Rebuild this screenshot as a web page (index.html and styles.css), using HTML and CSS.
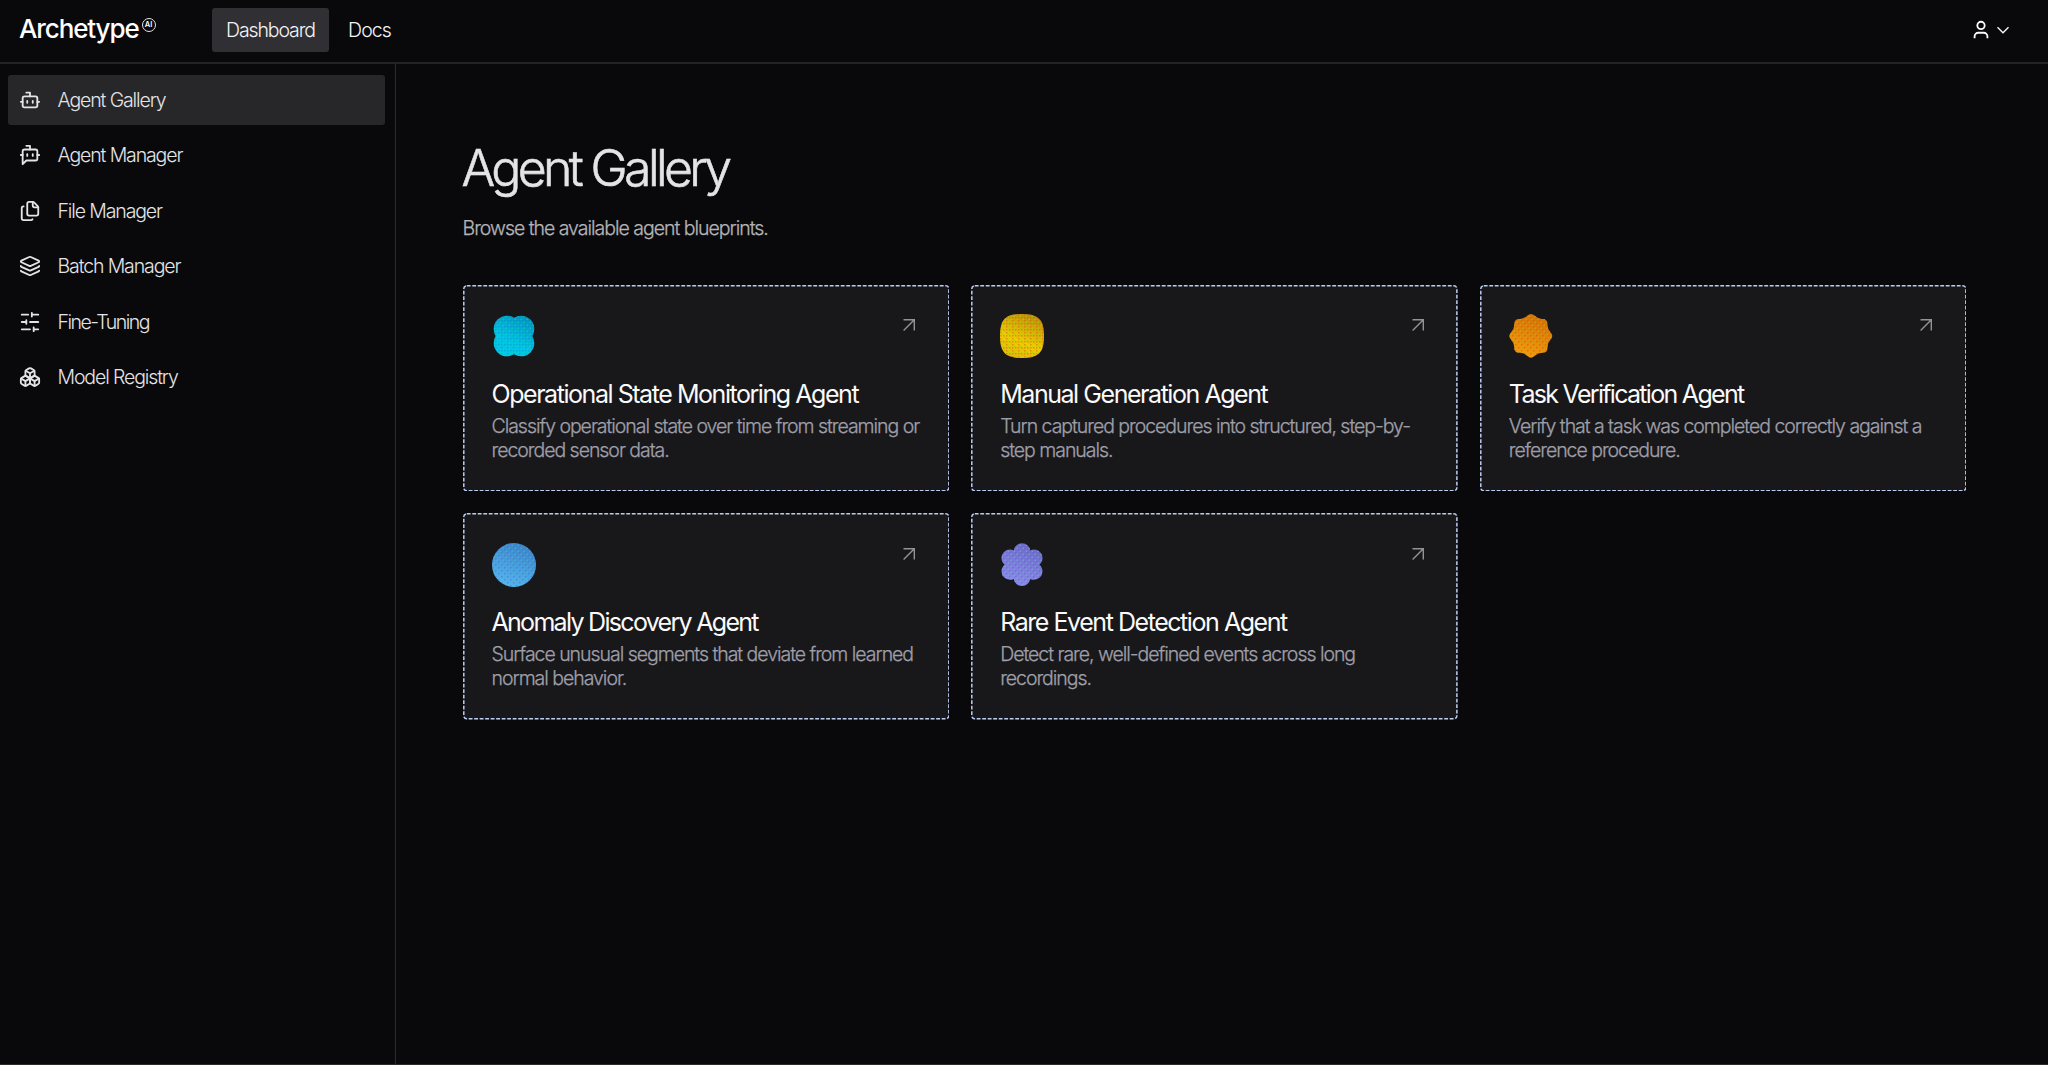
FILE: index.html
```html
<!DOCTYPE html>
<html lang="en">

<head>
  <meta charset="UTF-8">
  <meta name="viewport" content="width=device-width, initial-scale=1.0">
  <title>Agent Gallery</title>
  <link rel="stylesheet" href="styles.css">
</head>

<body>

  <!-- top bar -->
  <header class="topbar">
    <a class="logo">Archetype<span class="logo-badge">AI</span></a>
    <nav class="top-nav">
      <a class="top-link active">Dashboard</a>
      <a class="top-link docs">Docs</a>
    </nav>
    <button class="user-menu">
      <svg class="icon-user" viewBox="0 0 24 24"><path d="M19 21v-2a4 4 0 0 0-4-4H9a4 4 0 0 0-4 4v2"/><circle cx="12" cy="7" r="4"/></svg>
      <svg class="icon-chevron" viewBox="0 0 24 24"><path d="m6 9 6 6 6-6"/></svg>
    </button>
  </header>

  <div class="layout">

    <!-- sidebar -->
    <aside class="sidebar">
      <a class="side-link active">
        <svg viewBox="0 0 24 24"><path d="M12 8V4H8"/><rect width="16" height="12" x="4" y="8" rx="2"/><path d="M2 14h2M20 14h2M15 13v2M9 13v2"/></svg>
        <span>Agent Gallery</span>
      </a>
      <a class="side-link">
        <svg viewBox="0 0 24 24"><path d="M12 6V2H8"/><path d="m8 18-4 4V8a2 2 0 0 1 2-2h12a2 2 0 0 1 2 2v8a2 2 0 0 1-2 2Z"/><path d="M2 12h2M9 11v2M15 11v2M20 12h2"/></svg>
        <span>Agent Manager</span>
      </a>
      <a class="side-link">
        <svg viewBox="0 0 24 24"><path d="M15 2a2 2 0 0 1 1.414.586l4 4A2 2 0 0 1 21 8v7a2 2 0 0 1-2 2h-8a2 2 0 0 1-2-2V4a2 2 0 0 1 2-2z"/><path d="M15 2v4a2 2 0 0 0 2 2h4"/><path d="M5 7a2 2 0 0 0-2 2v11a2 2 0 0 0 2 2h8a2 2 0 0 0 1.732-1"/></svg>
        <span>File Manager</span>
      </a>
      <a class="side-link">
        <svg viewBox="0 0 24 24"><path d="m12.83 2.18a2 2 0 0 0-1.66 0L2.6 6.08a1 1 0 0 0 0 1.83l8.58 3.91a2 2 0 0 0 1.66 0l8.58-3.9a1 1 0 0 0 0-1.83Z"/><path d="M2 12a1 1 0 0 0 .58.91l8.6 3.91a2 2 0 0 0 1.65 0l8.58-3.9A1 1 0 0 0 22 12"/><path d="M2 17a1 1 0 0 0 .58.91l8.6 3.91a2 2 0 0 0 1.65 0l8.58-3.9A1 1 0 0 0 22 17"/></svg>
        <span>Batch Manager</span>
      </a>
      <a class="side-link">
        <svg viewBox="0 0 24 24"><path d="M21 4h-7M10 4H3M21 12h-9M8 12H3M21 20h-5M12 20H3M14 2v4M8 10v4M16 18v4"/></svg>
        <span class="tuning-text">Fine-Tuning</span>
      </a>
      <a class="side-link">
        <svg viewBox="0 0 24 24"><path d="M2.97 12.92A2 2 0 0 0 2 14.63v3.24a2 2 0 0 0 .97 1.71l3 1.8a2 2 0 0 0 2.06 0L12 19v-5.5l-5-3-4.03 2.42Z"/><path d="m7 16.5-4.74-2.85M7 16.5l5-3M7 16.5v5.17"/><path d="M12 13.5V19l3.97 2.38a2 2 0 0 0 2.06 0l3-1.8a2 2 0 0 0 .97-1.71v-3.24a2 2 0 0 0-.97-1.71L17 10.5l-5 3Z"/><path d="m17 16.5-5-3M17 16.5l4.74-2.85M17 16.5v5.17"/><path d="M7.97 4.42A2 2 0 0 0 7 6.13v4.37l5 3 5-3V6.13a2 2 0 0 0-.97-1.71l-3-1.8a2 2 0 0 0-2.06 0l-3 1.8Z"/><path d="M12 8 7.26 5.15M12 8l4.74-2.85M12 13.5V8"/></svg>
        <span>Model Registry</span>
      </a>
    </aside>

    <!-- main content -->
    <main class="content">
      <h1>Agent Gallery</h1>
      <p class="subtitle">Browse the available agent blueprints.</p>

      <div class="agent-grid">
        <a class="agent-card">
          <svg class="outline"><rect/></svg>
          <div class="card-top">
            <svg class="agent-icon" viewBox="0 0 44 44">
              <g clip-path="url(#clover)"><rect width="44" height="44" fill="url(#cyan)"/><rect width="44" height="44" fill="url(#cyan-dots)"/></g>
            </svg>
            <svg class="arrow" viewBox="0 0 12 12"><path d="M.5 .7H11.3V11.5M11.3 .7 .6 11.4"/></svg>
          </div>
          <h2>Operational State Monitoring Agent</h2>
          <p>Classify operational state over time from streaming or recorded sensor data.</p>
        </a>

        <a class="agent-card">
          <svg class="outline"><rect/></svg>
          <div class="card-top">
            <svg class="agent-icon" viewBox="0 0 44 44">
              <g clip-path="url(#squircle)"><rect width="44" height="44" fill="url(#yellow)"/><rect width="44" height="44" fill="url(#yellow-dots)"/></g>
            </svg>
            <svg class="arrow" viewBox="0 0 12 12"><path d="M.5 .7H11.3V11.5M11.3 .7 .6 11.4"/></svg>
          </div>
          <h2>Manual Generation Agent</h2>
          <p>Turn captured procedures into structured, step-by-step manuals.</p>
        </a>

        <a class="agent-card">
          <svg class="outline"><rect/></svg>
          <div class="card-top">
            <svg class="agent-icon" viewBox="0 0 44 44">
              <g clip-path="url(#star)"><rect width="44" height="44" fill="url(#orange)"/><rect width="44" height="44" fill="url(#orange-dots)"/></g>
            </svg>
            <svg class="arrow" viewBox="0 0 12 12"><path d="M.5 .7H11.3V11.5M11.3 .7 .6 11.4"/></svg>
          </div>
          <h2 class="tight">Task Verification Agent</h2>
          <p>Verify that a task was completed correctly against a reference procedure.</p>
        </a>

        <a class="agent-card">
          <svg class="outline"><rect/></svg>
          <div class="card-top">
            <svg class="agent-icon" viewBox="0 0 44 44">
              <circle cx="22" cy="22" r="22" fill="url(#blue)"/>
              <circle cx="22" cy="22" r="22" fill="url(#blue-dots)"/>
            </svg>
            <svg class="arrow" viewBox="0 0 12 12"><path d="M.5 .7H11.3V11.5M11.3 .7 .6 11.4"/></svg>
          </div>
          <h2 class="tight">Anomaly Discovery Agent</h2>
          <p>Surface unusual segments that deviate from learned normal behavior.</p>
        </a>

        <a class="agent-card">
          <svg class="outline"><rect/></svg>
          <div class="card-top">
            <svg class="agent-icon" viewBox="0 0 44 44">
              <g clip-path="url(#flower)"><rect width="44" height="44" fill="url(#violet)"/><rect width="44" height="44" fill="url(#violet-dots)"/></g>
            </svg>
            <svg class="arrow" viewBox="0 0 12 12"><path d="M.5 .7H11.3V11.5M11.3 .7 .6 11.4"/></svg>
          </div>
          <h2>Rare Event Detection Agent</h2>
          <p>Detect rare, well-defined events across long recordings.</p>
        </a>
      </div>
    </main>
  </div>

  <!-- icon shapes, gradients and dither patterns -->
  <svg class="defs">
    <defs>
      <clipPath id="clover"><circle cx="15" cy="15" r="13.3"/><circle cx="29" cy="15" r="13.3"/><circle cx="15" cy="29" r="13.3"/><circle cx="29" cy="29" r="13.3"/></clipPath>
      <clipPath id="squircle"><path d="M22 0C38 0 44 5 44 22S38 44 22 44 0 39 0 22 6 0 22 0Z"/></clipPath>
      <clipPath id="star"><path d="M18.5 1.6Q22 -1.6 25.5 1.6Q29.3 5.2 33.4 5Q38.5 4.8 38.5 10.5Q38.3 15 41.6 18.5Q45 22 41.6 25.5Q38.3 29 38.5 33.5Q38.5 39 33.4 38.8Q29.3 38.6 25.5 42Q22 45.6 18.5 42Q14.7 38.6 10.6 38.8Q5.2 39 5.2 33.5Q5.4 29 2 25.5Q-1.4 22 2 18.5Q5.4 15 5.2 10.5Q5.2 4.8 10.6 5Q14.7 5.2 18.5 1.6Z"/></clipPath>
      <clipPath id="flower"><circle cx="22" cy="21.5" r="10"/><circle cx="22" cy="8.5" r="8.3"/><circle cx="22" cy="34.7" r="8.3"/><circle cx="10" cy="15" r="8.5"/><circle cx="34" cy="15" r="8.5"/><circle cx="10" cy="28.3" r="8.5"/><circle cx="34" cy="28.3" r="8.5"/></clipPath>

      <linearGradient id="cyan" x1=".8" y1="0" x2=".3" y2="1"><stop offset="0" stop-color="#0590be"/><stop offset=".65" stop-color="#02c4e4"/><stop offset="1" stop-color="#02c8e6"/></linearGradient>
      <linearGradient id="yellow" x1=".8" y1="0" x2=".4" y2="1"><stop offset="0" stop-color="#b98a0c"/><stop offset=".65" stop-color="#efcc02"/><stop offset="1" stop-color="#e2be0a"/></linearGradient>
      <linearGradient id="orange" x1=".8" y1="0" x2=".4" y2="1"><stop offset="0" stop-color="#d07005"/><stop offset="1" stop-color="#f29c0c"/></linearGradient>
      <linearGradient id="blue" x1=".8" y1="0" x2=".4" y2="1"><stop offset="0" stop-color="#3a82c4"/><stop offset="1" stop-color="#56b4ee"/></linearGradient>
      <linearGradient id="violet" x1=".8" y1="0" x2=".4" y2="1"><stop offset="0" stop-color="#6868c4"/><stop offset="1" stop-color="#898eea"/></linearGradient>

      <pattern id="cyan-dots" width="6" height="6" patternUnits="userSpaceOnUse"><path fill="#0a74cc" opacity=".35" d="M0 0h1.5v1.5H0zM3 3h1.5v1.5H3zM3 0h1.5v1.5H3z"/><path fill="#08d8b4" opacity=".5" d="M1.5 1.5H3V3H1.5zM4.5 4.5H6V6H4.5z"/></pattern>
      <pattern id="yellow-dots" width="6" height="6" patternUnits="userSpaceOnUse"><path fill="#cc6008" opacity=".5" d="M0 0h1.5v1.5H0zM3 3h1.5v1.5H3zM0 3h1.5v1.5H0z"/><path fill="#a8d010" opacity=".65" d="M1.5 1.5H3V3H1.5zM4.5 4.5H6V6H4.5z"/></pattern>
      <pattern id="orange-dots" width="6" height="6" patternUnits="userSpaceOnUse"><path fill="#e8500c" opacity=".6" d="M0 0h1.5v1.5H0zM3 3h1.5v1.5H3z"/><path fill="#bcae20" opacity=".65" d="M1.5 1.5H3V3H1.5zM4.5 4.5H6V6H4.5z"/></pattern>
      <pattern id="blue-dots" width="6" height="6" patternUnits="userSpaceOnUse"><path fill="#4468f0" opacity=".5" d="M0 0h1.5v1.5H0zM3 3h1.5v1.5H3z"/><path fill="#3cc0cc" opacity=".6" d="M1.5 1.5H3V3H1.5zM4.5 4.5H6V6H4.5z"/></pattern>
      <pattern id="violet-dots" width="6" height="6" patternUnits="userSpaceOnUse"><path fill="#7a4ee4" opacity=".5" d="M0 0h1.5v1.5H0zM3 3h1.5v1.5H3z"/><path fill="#74b0cc" opacity=".65" d="M1.5 1.5H3V3H1.5zM4.5 4.5H6V6H4.5z"/></pattern>
    </defs>
  </svg>

</body>

</html>
```
FILE: styles.css
```css
* {
  margin: 0;
  padding: 0;
  box-sizing: border-box;
}

body {
  display: flex;
  flex-direction: column;
  height: 100vh;
  overflow: hidden;
  background-color: #09090b;
  border-bottom: 1px solid #2b2a2c;
  font-family: Inter, "Liberation Sans", sans-serif;
  font-size: 19.5px;
  font-weight: 300;
  letter-spacing: -0.0575em;
  color: #e4e4e7;
}

/* top bar */
.topbar {
  display: flex;
  align-items: flex-start;
  flex-shrink: 0;
  height: 64px;
  padding: 8px 34px 0 19px;
  border-bottom: 2px solid #232326;
}

.logo {
  display: flex;
  width: 193px;
  font-size: 26px;
  font-weight: 500;
  line-height: 42px;
  letter-spacing: -0.043em;
  color: #fff;
}

.logo-badge {
  width: 14px;
  height: 14px;
  margin: 10px 0 0 3px;
  border: 1px solid #e4e4e7;
  border-radius: 50%;
  font-size: 7.5px;
  font-weight: 600;
  line-height: 12px;
  letter-spacing: 0;
  text-align: center;
}

.top-nav {
  display: flex;
  gap: 5px;
}

.top-link {
  height: 44px;
  padding: 0 14px;
  border-radius: 3px;
  line-height: 44px;
  color: #f4f4f5;
}

.top-link.active {
  width: 117px;
  background-color: #2f2f34;
}

.top-link.docs {
  letter-spacing: -0.045em;
}

.user-menu {
  display: flex;
  align-items: center;
  margin: 11px 0 0 auto;
  background: none;
  border: none;
}

.user-menu svg {
  width: 22px;
  height: 22px;
  fill: none;
  stroke: #fafafa;
}

.icon-user {
  stroke-width: 2;
}

.icon-chevron {
  stroke-width: 1.4;
}

/* sidebar */
.layout {
  display: flex;
  flex: 1;
}

.sidebar {
  display: flex;
  flex-direction: column;
  gap: 5.4px;
  width: 396px;
  padding: 11px 10px 0 8px;
  border-right: 1px solid #2c2c2f;
}

.side-link {
  display: flex;
  align-items: center;
  gap: 16.5px;
  height: 50px;
  padding-left: 11px;
  border-radius: 3px;
}

.side-link.active {
  background-color: #27272a;
}

.side-link svg {
  width: 22px;
  height: 22px;
  fill: none;
  stroke: #e4e4e7;
  stroke-width: 2;
  stroke-linecap: round;
  stroke-linejoin: round;
}

.tuning-text {
  letter-spacing: -0.076em;
}

/* main content */
.content {
  flex: 1;
  padding: 72px 81.5px 0 66.5px;
}

h1 {
  margin-left: -1px;
  font-size: 50px;
  font-weight: 300;
  line-height: 64px;
  letter-spacing: -0.073em;
  -webkit-text-stroke: 0.6px;
}

.subtitle {
  margin-top: 16px;
  line-height: 24px;
  letter-spacing: -0.052em;
  color: #b4b4b8;
  -webkit-text-stroke: 0.25px;
}

.agent-grid {
  display: grid;
  grid-template-columns: repeat(3, 1fr);
  gap: 22px;
  margin-top: 44.5px;
}

.agent-card {
  position: relative;
  height: 206.5px;
  padding: 29.5px 28px 0 29px;
  border-radius: 4px;
  background-color: #18181b;
}

.outline {
  position: absolute;
  top: 0;
  left: 0;
  width: 100%;
  height: 100%;
}

.outline rect {
  x: 0.8px;
  y: 0.8px;
  width: calc(100% - 1.6px);
  height: calc(100% - 1.6px);
  rx: 3px;
  fill: none;
  stroke: #bccbf2;
  stroke-width: 1.5px;
  stroke-dasharray: 3.8 1.7;
}

.card-top {
  display: flex;
  justify-content: space-between;
}

.agent-icon {
  width: 44px;
  height: 44px;
}

.arrow {
  width: 12px;
  height: 12px;
  margin: 5px 6px 0 0;
  fill: none;
  stroke: #929297;
  stroke-width: 1.4;
}

h2 {
  margin-top: 19.5px;
  font-size: 25px;
  font-weight: 400;
  line-height: 32px;
  letter-spacing: -0.058em;
  white-space: nowrap;
  color: #fafafa;
}

h2.tight {
  letter-spacing: -0.068em;
}

.agent-card p {
  margin-top: 4px;
  line-height: 24.3px;
  letter-spacing: -0.053em;
  color: #9f9fa9;
  -webkit-text-stroke: 0.25px;
}

.defs {
  position: absolute;
  width: 0;
  height: 0;
}
```
